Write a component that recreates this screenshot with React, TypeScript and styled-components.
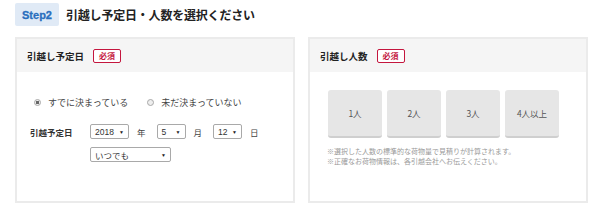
import React from "react";
import styled, { createGlobalStyle } from "styled-components";

const Global = createGlobalStyle`
  html, body { margin: 0; padding: 0; background: #fff; }
  body { font-family: "Noto Sans CJK JP", "Liberation Sans", sans-serif; color: #333; }
`;

const Page = styled.div`
  width: 600px;
  height: 215px;
  box-sizing: border-box;
  padding: 3px 12px 0 15px;
`;

const Heading = styled.div`
  display: flex;
  align-items: center;
  gap: 7px;
  height: 23px;
`;

const StepBadge = styled.div`
  width: 44px;
  height: 23px;
  display: flex;
  align-items: center;
  justify-content: center;
  background: #e0eaf6;
  color: #2a6fbe;
  font-family: "Liberation Sans", Arial, sans-serif;
  font-weight: 900;
  font-size: 11px;
  -webkit-text-stroke: 0.3px #2a6fbe;
  border-radius: 2px;
`;

const HeadingText = styled.h2`
  margin: 0;
  font-size: 12px;
  font-weight: bold;
  color: #222;
  letter-spacing: -0.2px;
`;

const Panels = styled.div`
  display: flex;
  gap: 13px;
  margin-top: 11px;
`;

const Panel = styled.section`
  width: 280px;
  height: 166px;
  box-sizing: border-box;
  border: 2px solid #ebebeb;
  display: flex;
  flex-direction: column;
`;

const PanelHeader = styled.div`
  height: 33px;
  flex: none;
  background: #f5f5f5;
  display: flex;
  align-items: center;
  gap: 9px;
  padding-left: 10px;
`;

const PanelTitle = styled.span`
  font-size: 9.5px;
  font-weight: bold;
  color: #222;
`;

const Required = styled.span`
  height: 14px;
  box-sizing: border-box;
  padding: 0 5px;
  display: inline-flex;
  align-items: center;
  border: 1px solid #c4163e;
  border-radius: 2px;
  background: #fff;
  color: #c4163e;
  font-size: 8px;
  font-weight: bold;
`;

const LeftBody = styled.div`
  padding: 22px 0 0 13px;
  display: flex;
  flex-direction: column;
`;

const RadioRow = styled.div`
  display: flex;
  align-items: center;
  height: 16px;
  padding-left: 4px;
  gap: 19px;
`;

const RadioOption = styled.label`
  display: flex;
  align-items: center;
  gap: 7px;
  font-size: 9px;
  color: #444;
`;

const RadioCircle = styled.span<{ $checked?: boolean }>`
  width: 7px;
  height: 7px;
  box-sizing: border-box;
  border-radius: 50%;
  border: 1px solid #a8a8a8;
  background: ${(p) => (p.$checked ? "radial-gradient(circle, #666 0 1.4px, #eee 1.8px)" : "#eee")};
`;

const DateRow = styled.div`
  display: flex;
  align-items: center;
  margin-top: 14px;
  height: 15px;
`;

const DateLabel = styled.span`
  width: 60px;
  font-size: 8.5px;
  font-weight: bold;
  color: #333;
`;

const Unit = styled.span`
  font-size: 8.5px;
  color: #444;
  margin: 0 11px 0 8px;
`;

const SubRow = styled.div`
  display: flex;
  margin-top: 8px;
  padding-left: 60px;
`;

const SelectBox = styled.div<{ $w: number }>`
  width: ${(p) => p.$w}px;
  height: 15px;
  box-sizing: border-box;
  border: 1px solid #a9a9a9;
  border-radius: 2px;
  background: #fff;
  display: flex;
  align-items: center;
  justify-content: space-between;
  padding: 0 4px 0 4px;
  font-family: "Liberation Sans", "Noto Sans CJK JP", sans-serif;
  font-size: 8.5px;
  color: #333;
`;

const Arrow = styled.span`
  font-size: 5px;
  color: #222;
`;

const Select = ({ value, w }: { value: string; w: number }) => (
  <SelectBox $w={w}>
    <span>{value}</span>
    <Arrow>▼</Arrow>
  </SelectBox>
);

const RightBody = styled.div`
  padding: 18px 0 0 17px;
  display: flex;
  flex-direction: column;
`;

const Buttons = styled.div`
  display: flex;
  gap: 5px;
  padding-left: 1px;
`;

const PersonButton = styled.button`
  width: 54px;
  height: 48px;
  box-sizing: border-box;
  border: none;
  border-bottom: 2px solid #cfcfcf;
  border-radius: 3px;
  background: #e6e6e6;
  color: #555;
  font-family: "Noto Sans CJK JP", sans-serif;
  font-size: 8.5px;
  padding: 0;
`;

const Notes = styled.div`
  margin-top: 8px;
  font-size: 7px;
  line-height: 10px;
  color: #9a9a9a;
`;

export default function App() {
  return (
    <Page>
      <Global />
      <Heading>
        <StepBadge>Step2</StepBadge>
        <HeadingText>引越し予定日・人数を選択ください</HeadingText>
      </Heading>
      <Panels>
        <Panel>
          <PanelHeader>
            <PanelTitle>引越し予定日</PanelTitle>
            <Required>必須</Required>
          </PanelHeader>
          <LeftBody>
            <RadioRow>
              <RadioOption>
                <RadioCircle $checked />
                すでに決まっている
              </RadioOption>
              <RadioOption>
                <RadioCircle />
                未だ決まっていない
              </RadioOption>
            </RadioRow>
            <DateRow>
              <DateLabel>引越予定日</DateLabel>
              <Select value="2018" w={39} />
              <Unit>年</Unit>
              <Select value="5" w={29} />
              <Unit>月</Unit>
              <Select value="12" w={29} />
              <Unit>日</Unit>
            </DateRow>
            <SubRow>
              <Select value="いつでも" w={81} />
            </SubRow>
          </LeftBody>
        </Panel>
        <Panel>
          <PanelHeader>
            <PanelTitle>引越し人数</PanelTitle>
            <Required>必須</Required>
          </PanelHeader>
          <RightBody>
            <Buttons>
              <PersonButton>1人</PersonButton>
              <PersonButton>2人</PersonButton>
              <PersonButton>3人</PersonButton>
              <PersonButton>4人以上</PersonButton>
            </Buttons>
            <Notes>
              ※選択した人数の標準的な荷物量で見積りが計算されます。
              <br />
              ※正確なお荷物情報は、各引越会社へお伝えください。
            </Notes>
          </RightBody>
        </Panel>
      </Panels>
    </Page>
  );
}
